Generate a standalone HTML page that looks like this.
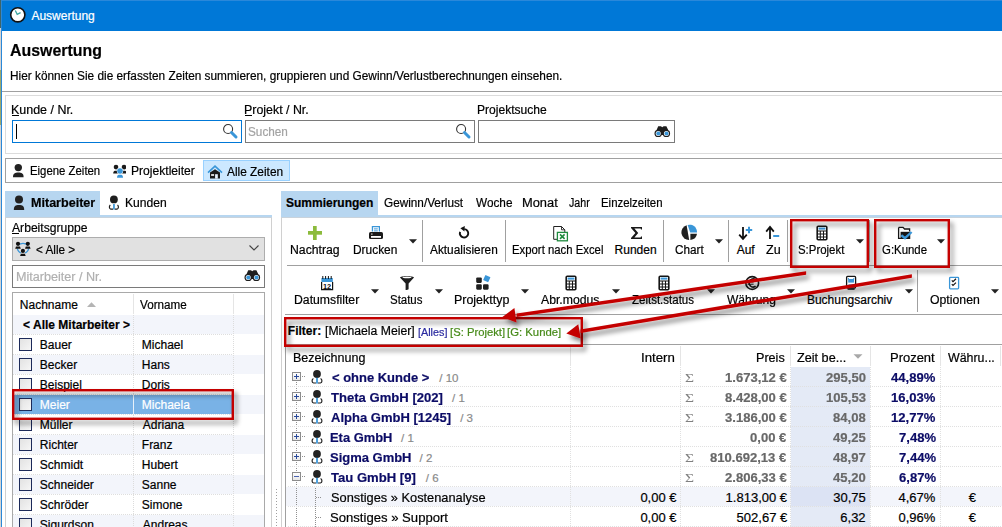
<!DOCTYPE html>
<html><head><meta charset="utf-8">
<style>
*{box-sizing:border-box;margin:0;padding:0}
html,body{width:1002px;height:527px;overflow:hidden;background:#fff}
body{position:relative;font-family:"Liberation Sans",sans-serif;font-size:12px;color:#000}
.a{position:absolute}
.t{position:absolute;white-space:nowrap;line-height:16px;transform-origin:0 0;-webkit-text-stroke:0.2px currentColor}
</style></head><body>
<div class="a" style="left:0px;top:0px;width:1px;height:527px;background:#d4d4d4;"></div>
<div class="a" style="left:0px;top:0px;width:1px;height:28px;background:#3e6468;"></div>
<div class="a" style="left:0px;top:70px;width:1px;height:55px;background:#9ca86c;"></div>
<div class="a" style="left:1px;top:0px;width:1px;height:527px;background:#2b88d8;"></div>
<div class="a" style="left:2px;top:0px;width:1000px;height:31px;background:#0078d7;"></div>
<div class="a" style="left:2px;top:0px;width:1000px;height:1px;background:#2a88da;"></div>
<svg class="a" style="left:9px;top:6px" width="18" height="18" viewBox="0 0 18 18"><circle cx="8.8" cy="8.8" r="7.1" fill="#fff" stroke="#111" stroke-width="1.6"/>
 <path d="M6.3 4.5 L8.2 8.4 L11.6 6.6" fill="none" stroke="#3aa5a0" stroke-width="1.3"/></svg>
<div class="a" style="left:2px;top:91px;width:1000px;height:1px;background:#a0a0a0;"></div>
<div class="a" style="left:5px;top:95px;width:1100px;height:59px;border:1px solid #dcdcdc;background:transparent;"></div>
<div class="a" style="left:12px;top:115px;width:7px;height:1px;background:#000;"></div>
<div class="a" style="left:12px;top:120px;width:230px;height:23px;border:1px solid #0078d7;background:transparent;"></div>
<div class="a" style="left:16px;top:124px;width:1px;height:15px;background:#000;"></div>
<svg class="a" style="left:220px;top:122px" width="20" height="20" viewBox="0 0 20 20"><circle cx="8.1" cy="7" r="4.5" fill="none" stroke="#333" stroke-width="1.1"/>
 <path d="M11.5 10.5 L16 15" stroke="#3a96d8" stroke-width="3" stroke-linecap="round"/></svg>
<div class="a" style="left:245px;top:115px;width:7px;height:1px;background:#000;"></div>
<div class="a" style="left:245px;top:120px;width:230px;height:23px;border:1px solid #7a7a7a;background:transparent;"></div>
<svg class="a" style="left:453px;top:122px" width="20" height="20" viewBox="0 0 20 20"><circle cx="8.1" cy="7" r="4.5" fill="none" stroke="#333" stroke-width="1.1"/>
 <path d="M11.5 10.5 L16 15" stroke="#3a96d8" stroke-width="3" stroke-linecap="round"/></svg>
<div class="a" style="left:478px;top:120px;width:197px;height:23px;border:1px solid #7a7a7a;background:transparent;"></div>
<svg class="a" style="left:654px;top:125px" width="17" height="13" viewBox="0 0 17 13"><path d="M2.6 5 L4.2 1.2 L7 1.2 L8.2 2.2 L9.6 1.2 L12.4 1.2 L14.2 5 L10 10 L7 10Z" fill="#1e1e1e"/>
 <circle cx="4.2" cy="8.4" r="3.7" fill="#1e1e1e"/><circle cx="12.4" cy="8.4" r="3.7" fill="#1e1e1e"/>
 <circle cx="4.2" cy="8.4" r="2.5" fill="#fff"/><circle cx="12.4" cy="8.4" r="2.5" fill="#fff"/>
 <circle cx="4.3" cy="8.6" r="2" fill="#3a96d8"/><circle cx="12.5" cy="8.6" r="2" fill="#3a96d8"/></svg>
<div class="a" style="left:5px;top:158px;width:1100px;height:25px;border:1px solid #a0a0a0;background:transparent;"></div>
<svg class="a" style="left:12px;top:163px" width="13" height="16" viewBox="0 0 13 16"><circle cx="6.3" cy="4.6" r="3.7" fill="#222"/>
 <path d="M1 14.2 C1 10.5 3 9.6 6.3 9.6 C9.6 9.6 11.6 10.5 11.6 14.2 Z" fill="#222"/></svg>
<svg class="a" style="left:112px;top:164px" width="14" height="15" viewBox="0 0 14 15"><circle cx="4" cy="3.1" r="2.3" fill="#1a1a1a"/><path d="M1.2 9.6 C1.2 7.2 2.2 6.7 4 6.7 C5.8 6.7 6.8 7.2 6.8 9.6Z" fill="#1a1a1a"/>
 <circle cx="12" cy="3.1" r="2.3" fill="#1a1a1a"/><path d="M9.2 9.6 C9.2 7.2 10.2 6.7 12 6.7 C13.8 6.7 14.8 7.2 14.8 9.6Z" fill="#1a1a1a"/>
 <circle cx="8" cy="7" r="3.2" fill="#fff"/><circle cx="8" cy="7" r="2.8" fill="#3a96d8"/>
 <path d="M5 13.8 C5 11.2 6 10.8 8 10.8 C10 10.8 11 11.2 11 13.8Z" fill="#3a96d8"/></svg>
<div class="a" style="left:203px;top:160px;width:87px;height:21px;border:1px solid #99d1ff;background:#cce8ff;"></div>
<svg class="a" style="left:206px;top:164px" width="18" height="16" viewBox="0 0 18 16"><path d="M2 8.6 L9 2.2 L16 8.6" fill="none" stroke="#3a96d8" stroke-width="1.6"/>
 <path d="M4 14.6 L4 8.6 L9 5.2 L14 8.6 L14 14.6 Z" fill="#1a1a1a"/>
 <rect x="5.1" y="10.2" width="3" height="1.6" fill="#fff"/>
 <rect x="9.1" y="10.2" width="2.7" height="4.4" fill="#eaf4ff"/></svg>
<div class="a" style="left:5px;top:191px;width:95px;height:26px;background:#b7d6f0;"></div>
<div class="a" style="left:5px;top:215px;width:267px;height:2px;background:#b7d6f0;"></div>
<div class="a" style="left:5px;top:217px;width:267px;height:1px;background:#c9d3dc;"></div>
<div class="a" style="left:5px;top:218px;width:1px;height:309px;background:#d0d0d0;"></div>
<div class="a" style="left:271px;top:218px;width:1px;height:309px;background:#d0d0d0;"></div>
<svg class="a" style="left:12px;top:194px" width="14" height="17" viewBox="0 0 14 17"><circle cx="7" cy="5.5" r="4" fill="#222"/>
 <path d="M1.8 16 C1.8 12 3.5 10.9 7 10.9 C10.5 10.9 12.2 12 12.2 16 Z" fill="#222"/></svg>
<svg class="a" style="left:104px;top:193px" width="20" height="20" viewBox="0 0 20 20"><circle cx="9.9" cy="6.4" r="3.9" fill="#1e1e1e"/>
 <path d="M6.3 12 C5 13 5 15.6 6.8 16.2 L9.2 16.2" fill="none" stroke="#1e1e1e" stroke-width="1.2"/>
 <path d="M13.5 12 C14.8 13 14.8 15.6 13 16.2 L10.6 16.2" fill="none" stroke="#1e1e1e" stroke-width="1.2"/>
 <rect x="9.1" y="11" width="1.7" height="5.4" fill="#3a96d8"/></svg>
<div class="a" style="left:12px;top:233px;width:7px;height:1px;background:#000;"></div>
<div class="a" style="left:12px;top:237px;width:253px;height:24px;border:1px solid #adadad;background:#e1e1e1;"></div>
<svg class="a" style="left:13px;top:239px" width="20" height="19" viewBox="0 0 20 19"><path d="M5 6 Q10 2.8 15 6" fill="none" stroke="#3a96d8" stroke-width="1.1"/>
 <path d="M4.2 9.5 Q5.5 13.5 8 14" fill="none" stroke="#3a96d8" stroke-width="1.1"/>
 <path d="M15.8 9.5 Q14.5 13.5 12 14" fill="none" stroke="#3a96d8" stroke-width="1.1"/>
 <circle cx="5" cy="4.8" r="2.1" fill="#111"/><path d="M2.2 9.7 L3 7.6 L7 7.6 L7.8 9.7Z" fill="#111"/>
 <circle cx="14.8" cy="4.8" r="2.1" fill="#111"/><path d="M12 9.7 L12.8 7.6 L16.8 7.6 L17.6 9.7Z" fill="#111"/>
 <circle cx="9.9" cy="11.9" r="2.1" fill="#111"/><path d="M7.1 17 L7.9 14.8 L11.9 14.8 L12.7 17Z" fill="#111"/></svg>
<svg class="a" style="left:249px;top:244px" width="10" height="8" viewBox="0 0 10 8"><path d="M0.5 1.5 L5 6 L9.5 1.5" fill="none" stroke="#444" stroke-width="1.1"/></svg>
<div class="a" style="left:12px;top:265px;width:253px;height:23px;border:1px solid #7a7a7a;background:transparent;"></div>
<svg class="a" style="left:244px;top:269px" width="17" height="13" viewBox="0 0 17 13"><path d="M2.6 5 L4.2 1.2 L7 1.2 L8.2 2.2 L9.6 1.2 L12.4 1.2 L14.2 5 L10 10 L7 10Z" fill="#1e1e1e"/>
 <circle cx="4.2" cy="8.4" r="3.7" fill="#1e1e1e"/><circle cx="12.4" cy="8.4" r="3.7" fill="#1e1e1e"/>
 <circle cx="4.2" cy="8.4" r="2.5" fill="#fff"/><circle cx="12.4" cy="8.4" r="2.5" fill="#fff"/>
 <circle cx="4.3" cy="8.6" r="2" fill="#3a96d8"/><circle cx="12.5" cy="8.6" r="2" fill="#3a96d8"/></svg>
<div class="a" style="left:12px;top:292px;width:253px;height:260px;border:1px solid #a9a9a9;background:transparent;"></div>
<svg class="a" style="left:86px;top:301px" width="11" height="7" viewBox="0 0 11 7"><path d="M1 6 L5.5 1.2 L10 6Z" fill="#b4b4b4"/></svg>
<div class="a" style="left:133px;top:294px;width:1px;height:20px;background:#e5e5e5;"></div>
<div class="a" style="left:233px;top:294px;width:1px;height:20px;background:#e5e5e5;"></div>
<div class="a" style="left:13px;top:315px;width:251px;height:19px;background:#f3f5fb;"></div>
<div class="a" style="left:13px;top:334px;width:220px;height:1px;background:repeating-linear-gradient(90deg,#dedede 0 1px,transparent 1px 2px)"></div>
<div class="a" style="left:13px;top:354px;width:220px;height:1px;background:repeating-linear-gradient(90deg,#dedede 0 1px,transparent 1px 2px)"></div>
<div class="a" style="left:19px;top:338px;width:13px;height:13px;border:1px solid #1c2a5a;background:linear-gradient(135deg,#e2e2e2,#f6f6f6);"></div>
<div class="a" style="left:13px;top:355px;width:251px;height:19px;background:#f3f5fb;"></div>
<div class="a" style="left:13px;top:374px;width:220px;height:1px;background:repeating-linear-gradient(90deg,#dedede 0 1px,transparent 1px 2px)"></div>
<div class="a" style="left:19px;top:358px;width:13px;height:13px;border:1px solid #1c2a5a;background:linear-gradient(135deg,#e2e2e2,#f6f6f6);"></div>
<div class="a" style="left:13px;top:394px;width:220px;height:1px;background:repeating-linear-gradient(90deg,#dedede 0 1px,transparent 1px 2px)"></div>
<div class="a" style="left:19px;top:378px;width:13px;height:13px;border:1px solid #1c2a5a;background:linear-gradient(135deg,#e2e2e2,#f6f6f6);"></div>
<div class="a" style="left:13px;top:395px;width:251px;height:19px;background:#f3f5fb;"></div>
<div class="a" style="left:13px;top:395px;width:251px;height:19px;background:#f3f5fb;"></div>
<div class="a" style="left:13px;top:395px;width:220px;height:19px;background:#79b2e6;"></div>
<div class="a" style="left:13px;top:414px;width:220px;height:1px;background:repeating-linear-gradient(90deg,#dedede 0 1px,transparent 1px 2px)"></div>
<div class="a" style="left:19px;top:398px;width:13px;height:13px;border:1px solid #1c2a5a;background:linear-gradient(135deg,#e2e2e2,#f6f6f6);"></div>
<div class="a" style="left:13px;top:434px;width:220px;height:1px;background:repeating-linear-gradient(90deg,#dedede 0 1px,transparent 1px 2px)"></div>
<div class="a" style="left:19px;top:418px;width:13px;height:13px;border:1px solid #1c2a5a;background:linear-gradient(135deg,#e2e2e2,#f6f6f6);"></div>
<div class="a" style="left:13px;top:435px;width:251px;height:19px;background:#f3f5fb;"></div>
<div class="a" style="left:13px;top:454px;width:220px;height:1px;background:repeating-linear-gradient(90deg,#dedede 0 1px,transparent 1px 2px)"></div>
<div class="a" style="left:19px;top:438px;width:13px;height:13px;border:1px solid #1c2a5a;background:linear-gradient(135deg,#e2e2e2,#f6f6f6);"></div>
<div class="a" style="left:13px;top:474px;width:220px;height:1px;background:repeating-linear-gradient(90deg,#dedede 0 1px,transparent 1px 2px)"></div>
<div class="a" style="left:19px;top:458px;width:13px;height:13px;border:1px solid #1c2a5a;background:linear-gradient(135deg,#e2e2e2,#f6f6f6);"></div>
<div class="a" style="left:13px;top:475px;width:251px;height:19px;background:#f3f5fb;"></div>
<div class="a" style="left:13px;top:494px;width:220px;height:1px;background:repeating-linear-gradient(90deg,#dedede 0 1px,transparent 1px 2px)"></div>
<div class="a" style="left:19px;top:478px;width:13px;height:13px;border:1px solid #1c2a5a;background:linear-gradient(135deg,#e2e2e2,#f6f6f6);"></div>
<div class="a" style="left:13px;top:514px;width:220px;height:1px;background:repeating-linear-gradient(90deg,#dedede 0 1px,transparent 1px 2px)"></div>
<div class="a" style="left:19px;top:498px;width:13px;height:13px;border:1px solid #1c2a5a;background:linear-gradient(135deg,#e2e2e2,#f6f6f6);"></div>
<div class="a" style="left:13px;top:515px;width:251px;height:19px;background:#f3f5fb;"></div>
<div class="a" style="left:13px;top:534px;width:220px;height:1px;background:repeating-linear-gradient(90deg,#dedede 0 1px,transparent 1px 2px)"></div>
<div class="a" style="left:19px;top:518px;width:13px;height:13px;border:1px solid #1c2a5a;background:linear-gradient(135deg,#e2e2e2,#f6f6f6);"></div>
<div class="a" style="left:133px;top:315px;width:1px;height:212px;background:repeating-linear-gradient(#dcdcdc 0 1px,transparent 1px 2px)"></div>
<div class="a" style="left:233px;top:315px;width:1px;height:212px;background:repeating-linear-gradient(#dcdcdc 0 1px,transparent 1px 2px)"></div>
<div class="a" style="left:133px;top:395px;width:1px;height:19px;background:#e8f1fa;"></div>
<div class="a" style="left:276px;top:489px;width:1px;height:38px;background:repeating-linear-gradient(#a0a0a0 0 1px,transparent 1px 3px)"></div>
<div class="a" style="left:281px;top:191px;width:97px;height:26px;background:#b7d6f0;"></div>
<div class="a" style="left:281px;top:215px;width:721px;height:2px;background:#b7d6f0;"></div>
<div class="a" style="left:281px;top:217px;width:721px;height:1px;background:#c9d3dc;"></div>
<div class="a" style="left:281px;top:218px;width:1px;height:309px;background:#d0d0d0;"></div>
<svg class="a" style="left:308px;top:226px" width="14" height="14" viewBox="0 0 14 14"><rect x="5" y="0" width="3.7" height="14" fill="#8cbb3c"/><rect x="0" y="5" width="14" height="3.7" fill="#8cbb3c"/></svg>
<svg class="a" style="left:368px;top:225px" width="16" height="15" viewBox="0 0 16 15"><path d="M4.4 6.6 V1.6 H11.4 V6.6" fill="none" stroke="#3a96d8" stroke-width="1.2"/>
 <rect x="5.8" y="3.4" width="4" height="1" fill="#3a96d8"/><rect x="5.8" y="5.4" width="4" height="1" fill="#3a96d8"/>
 <rect x="1" y="7" width="14" height="7" rx="1.6" fill="#1a1a1a"/>
 <rect x="3" y="11" width="10" height="1.8" fill="#fff"/>
 <rect x="3" y="8.6" width="1.6" height="0.9" fill="#fff"/></svg>
<svg class="a" style="left:409px;top:239px" width="9" height="6" viewBox="0 0 9 6"><path d="M0 0.2 H8 L4 4.4Z" fill="#222"/></svg>
<div class="a" style="left:422px;top:220px;width:1px;height:42px;background:#a0a0a0;"></div>
<svg class="a" style="left:457px;top:225px" width="14" height="15" viewBox="0 0 14 15"><path d="M7.2 4.1 A4.2 4.2 0 1 1 3.1 6.9" fill="none" stroke="#111" stroke-width="1.9"/>
 <path d="M3.4 3.3 L7.8 1 L7.4 6.6Z" fill="#111"/></svg>
<div class="a" style="left:505px;top:220px;width:1px;height:42px;background:#a0a0a0;"></div>
<svg class="a" style="left:552px;top:225px" width="17" height="17" viewBox="0 0 17 17"><path d="M1.7 1.5 H9.5 L12.8 4.8 V14.3 H1.7 Z" fill="#fff" stroke="#222" stroke-width="1"/>
 <path d="M9.5 1.5 V4.8 H12.8" fill="none" stroke="#222" stroke-width="0.9"/>
 <rect x="5.4" y="7.4" width="10" height="8.4" fill="#fff" stroke="#1f8a3e" stroke-width="1.3"/>
 <path d="M8 9.4 L12.6 13.8 M12.6 9.4 L8 13.8" stroke="#1f8a3e" stroke-width="1.6"/></svg>
<svg class="a" style="left:630px;top:226px" width="13" height="14" viewBox="0 0 13 14"><path d="M1 1 H12 V3.6 H11 L10.6 2.6 H4.4 L8.2 7 L4.4 11.4 H10.6 L11 10.4 H12 V13 H1 V12 L5.4 7 L1 2Z" fill="#1a1a1a"/></svg>
<div class="a" style="left:663px;top:220px;width:1px;height:42px;background:#a0a0a0;"></div>
<svg class="a" style="left:681px;top:224px" width="17" height="17" viewBox="0 0 17 17"><path d="M5.6 1.2 A7.6 7.6 0 0 0 8.2 16 Z" fill="#1f1f1f"/>
 <path d="M9.4 9.8 H16 A7.4 7.4 0 0 1 9.4 16 Z" fill="#1f1f1f"/>
 <path d="M6.6 1 A7.4 7.4 0 0 1 16 8.6 H9.2 Z" fill="#3a96d8"/></svg>
<svg class="a" style="left:715px;top:239px" width="9" height="6" viewBox="0 0 9 6"><path d="M0 0.2 H8 L4 4.4Z" fill="#222"/></svg>
<div class="a" style="left:728px;top:220px;width:1px;height:42px;background:#a0a0a0;"></div>
<svg class="a" style="left:737px;top:225px" width="16" height="16" viewBox="0 0 16 16"><path d="M6 2 V14 M2.2 9.6 L6 13.8 L9.8 9.6" fill="none" stroke="#111" stroke-width="1.8"/>
 <path d="M12 1.8 V8.2 M8.8 5 H15.2" stroke="#3a96d8" stroke-width="2"/></svg>
<svg class="a" style="left:764px;top:225px" width="17" height="16" viewBox="0 0 17 16"><path d="M6 14 V2 M2.2 6.6 L6 2 L9.8 6.6" fill="none" stroke="#111" stroke-width="1.8"/>
 <path d="M9.2 11 H15.2" stroke="#3a96d8" stroke-width="2"/></svg>
<div class="a" style="left:787px;top:220px;width:1px;height:42px;background:#a0a0a0;"></div>
<svg class="a" style="left:816px;top:225px" width="12" height="16" viewBox="0 0 12 16"><rect x="1.2" y="1.2" width="9.6" height="13.6" rx="1" fill="#fff" stroke="#151515" stroke-width="1.6"/>
 <rect x="2.6" y="2.6" width="6.8" height="2" fill="#3a96d8"/>
 <path d="M1.2 6 H10.8 M1.2 9 H10.8 M1.2 12 H10.8 M4.3 6 V14.8 M7.5 6 V14.8" stroke="#151515" stroke-width="1"/></svg>
<svg class="a" style="left:856px;top:239px" width="9" height="6" viewBox="0 0 9 6"><path d="M0 0.2 H8 L4 4.4Z" fill="#222"/></svg>
<div class="a" style="left:869px;top:220px;width:1px;height:42px;background:#a0a0a0;"></div>
<svg class="a" style="left:897px;top:225px" width="17" height="16" viewBox="0 0 17 16"><path d="M1.6 2.4 H6 L7.6 4 H12.6 V6" fill="none" stroke="#151515" stroke-width="1.3"/>
 <path d="M1.6 2.4 V13.4 H12.6 V6.5" fill="none" stroke="#151515" stroke-width="1.3"/>
 <rect x="3.6" y="6.8" width="9" height="6.6" fill="#151515"/>
 <path d="M4.3 10.2 L8 13.2 L14.6 7" fill="none" stroke="#3a96d8" stroke-width="2.4"/></svg>
<svg class="a" style="left:937px;top:239px" width="9" height="6" viewBox="0 0 9 6"><path d="M0 0.2 H8 L4 4.4Z" fill="#222"/></svg>
<div class="a" style="left:287px;top:265px;width:715px;height:1px;background:#a0a0a0;"></div>
<svg class="a" style="left:320px;top:275px" width="14" height="16" viewBox="0 0 14 16"><rect x="1.4" y="3" width="11.4" height="4" fill="#3a96d8"/>
 <path d="M2.8 1 V4 M5.6 1 V4 M8.4 1 V4 M11.2 1 V4" stroke="#111" stroke-width="1"/>
 <path d="M1.6 7 V14.6 H12.6 V7" fill="none" stroke="#111" stroke-width="1.2"/>
 <text x="7.1" y="13.6" font-family="Liberation Sans" font-size="7.4" font-weight="bold" text-anchor="middle" fill="#111">12</text></svg>
<svg class="a" style="left:371px;top:289px" width="9" height="6" viewBox="0 0 9 6"><path d="M0 0.2 H8 L4 4.4Z" fill="#222"/></svg>
<svg class="a" style="left:399px;top:275px" width="16" height="16" viewBox="0 0 16 16"><path d="M1 2.6 C1 0.8 15 0.8 15 2.6 L9.6 8.6 V14 C9.6 14.6 7.6 15 6.6 15 V8.6 Z" fill="#1f1f1f"/>
 <ellipse cx="8" cy="2.5" rx="4.6" ry="0.7" fill="#fff"/></svg>
<svg class="a" style="left:435px;top:289px" width="9" height="6" viewBox="0 0 9 6"><path d="M0 0.2 H8 L4 4.4Z" fill="#222"/></svg>
<svg class="a" style="left:475px;top:274px" width="16" height="17" viewBox="0 0 16 17"><rect x="1.2" y="3.5" width="5.6" height="5.4" rx="1.1" fill="#1f1f1f"/>
 <rect x="1.2" y="10.3" width="5.6" height="5.4" rx="1.1" fill="#1f1f1f"/>
 <rect x="8" y="10.3" width="5.6" height="5.4" rx="1.1" fill="#1f1f1f"/>
 <rect x="9" y="1.8" width="5.6" height="5.6" rx="0.6" fill="#3a96d8" transform="rotate(25 11.8 4.6)"/></svg>
<svg class="a" style="left:521px;top:289px" width="9" height="6" viewBox="0 0 9 6"><path d="M0 0.2 H8 L4 4.4Z" fill="#222"/></svg>
<svg class="a" style="left:565px;top:275px" width="12" height="16" viewBox="0 0 12 16"><rect x="1.2" y="1.2" width="9.6" height="13.6" rx="1" fill="#fff" stroke="#151515" stroke-width="1.6"/>
 <rect x="2.6" y="2.6" width="6.8" height="2" fill="#3a96d8"/>
 <path d="M1.2 6 H10.8 M1.2 9 H10.8 M1.2 12 H10.8 M4.3 6 V14.8 M7.5 6 V14.8" stroke="#151515" stroke-width="1"/></svg>
<svg class="a" style="left:612px;top:289px" width="9" height="6" viewBox="0 0 9 6"><path d="M0 0.2 H8 L4 4.4Z" fill="#222"/></svg>
<svg class="a" style="left:658px;top:275px" width="12" height="16" viewBox="0 0 12 16"><rect x="1.2" y="1.2" width="9.6" height="13.6" rx="1" fill="#fff" stroke="#151515" stroke-width="1.6"/>
 <rect x="2.6" y="2.6" width="6.8" height="2" fill="#3a96d8"/>
 <path d="M1.2 6 H10.8 M1.2 9 H10.8 M1.2 12 H10.8 M4.3 6 V14.8 M7.5 6 V14.8" stroke="#151515" stroke-width="1"/></svg>
<svg class="a" style="left:707px;top:289px" width="9" height="6" viewBox="0 0 9 6"><path d="M0 0.2 H8 L4 4.4Z" fill="#222"/></svg>
<svg class="a" style="left:744px;top:275px" width="16" height="16" viewBox="0 0 16 16"><circle cx="8.2" cy="8" r="6.4" fill="#fff" stroke="#151515" stroke-width="1.6"/>
 <path d="M11.6 4.8 A4 4 0 1 0 11.6 11.2" fill="none" stroke="#151515" stroke-width="1.6"/>
 <path d="M3.6 7 H9.6 M3.6 9.2 H9.6" stroke="#151515" stroke-width="1"/></svg>
<svg class="a" style="left:787px;top:289px" width="9" height="6" viewBox="0 0 9 6"><path d="M0 0.2 H8 L4 4.4Z" fill="#222"/></svg>
<svg class="a" style="left:845px;top:275px" width="12" height="16" viewBox="0 0 12 16"><rect x="1.6" y="1.4" width="9" height="11.6" rx="1" fill="#fff" stroke="#151515" stroke-width="1.3"/>
 <rect x="3.2" y="4" width="5.8" height="3.6" fill="#3a96d8"/>
 <path d="M3.4 3 V4.4 M8.8 3 V4.4 M3.4 9.8 H8.8" stroke="#3a96d8" stroke-width="1"/>
 <rect x="2.6" y="13.4" width="7" height="1.4" fill="#151515"/></svg>
<svg class="a" style="left:905px;top:289px" width="9" height="6" viewBox="0 0 9 6"><path d="M0 0.2 H8 L4 4.4Z" fill="#222"/></svg>
<div class="a" style="left:917px;top:270px;width:1px;height:42px;background:#a0a0a0;"></div>
<svg class="a" style="left:948px;top:276px" width="12" height="14" viewBox="0 0 12 14"><rect x="1.6" y="1.4" width="9" height="11.4" rx="0.8" fill="#fff" stroke="#3a96d8" stroke-width="1.3"/>
 <path d="M3.8 4.4 L5 5.6 L8 2.8 M3.8 8.2 L5 9.4 L8 6.6" fill="none" stroke="#151515" stroke-width="1.2"/></svg>
<svg class="a" style="left:991px;top:289px" width="9" height="6" viewBox="0 0 9 6"><path d="M0 0.2 H8 L4 4.4Z" fill="#222"/></svg>
<div class="a" style="left:285px;top:314px;width:717px;height:1px;background:#a0a0a0;"></div>
<div class="a" style="left:285px;top:344px;width:717px;height:1px;background:#a0a0a0;"></div>
<div class="a" style="left:285px;top:344px;width:1px;height:183px;background:#a0a0a0;"></div>
<div class="a" style="left:570px;top:346px;width:1px;height:20px;background:#e5e5e5;"></div>
<div class="a" style="left:680px;top:346px;width:1px;height:20px;background:#e5e5e5;"></div>
<div class="a" style="left:790px;top:346px;width:1px;height:20px;background:#e5e5e5;"></div>
<svg class="a" style="left:853px;top:354px" width="10" height="5" viewBox="0 0 10 5"><path d="M0.5 0.2 H9.5 L5 4.8Z" fill="#a8a8a8"/></svg>
<div class="a" style="left:870px;top:346px;width:1px;height:20px;background:#e5e5e5;"></div>
<div class="a" style="left:940px;top:346px;width:1px;height:20px;background:#e5e5e5;"></div>
<div class="a" style="left:1000px;top:346px;width:1px;height:20px;background:#e5e5e5;"></div>
<div class="a" style="left:791px;top:367px;width:79px;height:160px;background:#e4eaf6;"></div>
<div class="a" style="left:286px;top:487px;width:716px;height:19px;background:#f3f5fb;"></div>
<div class="a" style="left:791px;top:487px;width:79px;height:19px;background:#dce3f4;"></div>
<div class="a" style="left:296px;top:382px;width:1px;height:145px;background:repeating-linear-gradient(#909090 0 1px,transparent 1px 2px)"></div>
<div class="a" style="left:315px;top:488px;width:1px;height:39px;background:repeating-linear-gradient(#909090 0 1px,transparent 1px 2px)"></div>
<div class="a" style="left:292px;top:372px;width:9px;height:9px;border:1px solid #8c8c8c;background:linear-gradient(#fff,#e6e6e6);"></div>
<div class="a" style="left:294px;top:376px;width:5px;height:1px;background:#2a4a9a;"></div>
<div class="a" style="left:296px;top:374px;width:1px;height:5px;background:#2a4a9a;"></div>
<div class="a" style="left:302px;top:376px;width:4px;height:1px;background:repeating-linear-gradient(90deg,#909090 0 1px,transparent 1px 2px)"></div>
<svg class="a" style="left:311px;top:370px" width="12" height="14" viewBox="0 0 12 14"><circle cx="6" cy="4" r="3.9" fill="#222"/>
 <path d="M2.4 8.6 C0.6 9.6 0.6 12.6 2.6 13 L5 13 M9.6 8.6 C11.4 9.6 11.4 12.6 9.4 13 L7 13" fill="none" stroke="#222" stroke-width="1.2"/>
 <rect x="5.1" y="7.8" width="1.8" height="5.8" fill="#3a96d8"/></svg>
<div class="a" style="left:292px;top:392px;width:9px;height:9px;border:1px solid #8c8c8c;background:linear-gradient(#fff,#e6e6e6);"></div>
<div class="a" style="left:294px;top:396px;width:5px;height:1px;background:#2a4a9a;"></div>
<div class="a" style="left:296px;top:394px;width:1px;height:5px;background:#2a4a9a;"></div>
<div class="a" style="left:302px;top:396px;width:4px;height:1px;background:repeating-linear-gradient(90deg,#909090 0 1px,transparent 1px 2px)"></div>
<svg class="a" style="left:311px;top:390px" width="12" height="14" viewBox="0 0 12 14"><circle cx="6" cy="4" r="3.9" fill="#222"/>
 <path d="M2.4 8.6 C0.6 9.6 0.6 12.6 2.6 13 L5 13 M9.6 8.6 C11.4 9.6 11.4 12.6 9.4 13 L7 13" fill="none" stroke="#222" stroke-width="1.2"/>
 <rect x="5.1" y="7.8" width="1.8" height="5.8" fill="#3a96d8"/></svg>
<div class="a" style="left:292px;top:412px;width:9px;height:9px;border:1px solid #8c8c8c;background:linear-gradient(#fff,#e6e6e6);"></div>
<div class="a" style="left:294px;top:416px;width:5px;height:1px;background:#2a4a9a;"></div>
<div class="a" style="left:296px;top:414px;width:1px;height:5px;background:#2a4a9a;"></div>
<div class="a" style="left:302px;top:416px;width:4px;height:1px;background:repeating-linear-gradient(90deg,#909090 0 1px,transparent 1px 2px)"></div>
<svg class="a" style="left:311px;top:410px" width="12" height="14" viewBox="0 0 12 14"><circle cx="6" cy="4" r="3.9" fill="#222"/>
 <path d="M2.4 8.6 C0.6 9.6 0.6 12.6 2.6 13 L5 13 M9.6 8.6 C11.4 9.6 11.4 12.6 9.4 13 L7 13" fill="none" stroke="#222" stroke-width="1.2"/>
 <rect x="5.1" y="7.8" width="1.8" height="5.8" fill="#3a96d8"/></svg>
<div class="a" style="left:292px;top:432px;width:9px;height:9px;border:1px solid #8c8c8c;background:linear-gradient(#fff,#e6e6e6);"></div>
<div class="a" style="left:294px;top:436px;width:5px;height:1px;background:#2a4a9a;"></div>
<div class="a" style="left:296px;top:434px;width:1px;height:5px;background:#2a4a9a;"></div>
<div class="a" style="left:302px;top:436px;width:4px;height:1px;background:repeating-linear-gradient(90deg,#909090 0 1px,transparent 1px 2px)"></div>
<svg class="a" style="left:311px;top:430px" width="12" height="14" viewBox="0 0 12 14"><circle cx="6" cy="4" r="3.9" fill="#222"/>
 <path d="M2.4 8.6 C0.6 9.6 0.6 12.6 2.6 13 L5 13 M9.6 8.6 C11.4 9.6 11.4 12.6 9.4 13 L7 13" fill="none" stroke="#222" stroke-width="1.2"/>
 <rect x="5.1" y="7.8" width="1.8" height="5.8" fill="#3a96d8"/></svg>
<div class="a" style="left:292px;top:452px;width:9px;height:9px;border:1px solid #8c8c8c;background:linear-gradient(#fff,#e6e6e6);"></div>
<div class="a" style="left:294px;top:456px;width:5px;height:1px;background:#2a4a9a;"></div>
<div class="a" style="left:296px;top:454px;width:1px;height:5px;background:#2a4a9a;"></div>
<div class="a" style="left:302px;top:456px;width:4px;height:1px;background:repeating-linear-gradient(90deg,#909090 0 1px,transparent 1px 2px)"></div>
<svg class="a" style="left:311px;top:450px" width="12" height="14" viewBox="0 0 12 14"><circle cx="6" cy="4" r="3.9" fill="#222"/>
 <path d="M2.4 8.6 C0.6 9.6 0.6 12.6 2.6 13 L5 13 M9.6 8.6 C11.4 9.6 11.4 12.6 9.4 13 L7 13" fill="none" stroke="#222" stroke-width="1.2"/>
 <rect x="5.1" y="7.8" width="1.8" height="5.8" fill="#3a96d8"/></svg>
<div class="a" style="left:292px;top:472px;width:9px;height:9px;border:1px solid #8c8c8c;background:linear-gradient(#fff,#e6e6e6);"></div>
<div class="a" style="left:294px;top:476px;width:5px;height:1px;background:#4a62b0;"></div>
<div class="a" style="left:302px;top:476px;width:4px;height:1px;background:repeating-linear-gradient(90deg,#909090 0 1px,transparent 1px 2px)"></div>
<svg class="a" style="left:311px;top:470px" width="12" height="14" viewBox="0 0 12 14"><circle cx="6" cy="4" r="3.9" fill="#222"/>
 <path d="M2.4 8.6 C0.6 9.6 0.6 12.6 2.6 13 L5 13 M9.6 8.6 C11.4 9.6 11.4 12.6 9.4 13 L7 13" fill="none" stroke="#222" stroke-width="1.2"/>
 <rect x="5.1" y="7.8" width="1.8" height="5.8" fill="#3a96d8"/></svg>
<div class="a" style="left:316px;top:497px;width:6px;height:1px;background:repeating-linear-gradient(90deg,#909090 0 1px,transparent 1px 2px)"></div>
<div class="a" style="left:316px;top:517px;width:6px;height:1px;background:repeating-linear-gradient(90deg,#909090 0 1px,transparent 1px 2px)"></div>
<div class="a" style="left:288px;top:386px;width:714px;height:1px;background:repeating-linear-gradient(90deg,#e0e0e0 0 1px,transparent 1px 2px)"></div>
<div class="a" style="left:288px;top:406px;width:714px;height:1px;background:repeating-linear-gradient(90deg,#e0e0e0 0 1px,transparent 1px 2px)"></div>
<div class="a" style="left:288px;top:426px;width:714px;height:1px;background:repeating-linear-gradient(90deg,#e0e0e0 0 1px,transparent 1px 2px)"></div>
<div class="a" style="left:288px;top:446px;width:714px;height:1px;background:repeating-linear-gradient(90deg,#e0e0e0 0 1px,transparent 1px 2px)"></div>
<div class="a" style="left:288px;top:466px;width:714px;height:1px;background:repeating-linear-gradient(90deg,#e0e0e0 0 1px,transparent 1px 2px)"></div>
<div class="a" style="left:288px;top:486px;width:714px;height:1px;background:repeating-linear-gradient(90deg,#e0e0e0 0 1px,transparent 1px 2px)"></div>
<div class="a" style="left:288px;top:506px;width:714px;height:1px;background:repeating-linear-gradient(90deg,#e0e0e0 0 1px,transparent 1px 2px)"></div>
<div class="a" style="left:288px;top:526px;width:714px;height:1px;background:repeating-linear-gradient(90deg,#e0e0e0 0 1px,transparent 1px 2px)"></div>
<div class="a" style="left:570px;top:367px;width:1px;height:160px;background:repeating-linear-gradient(#e0e0e0 0 1px,transparent 1px 2px)"></div>
<div class="a" style="left:680px;top:367px;width:1px;height:160px;background:repeating-linear-gradient(#e0e0e0 0 1px,transparent 1px 2px)"></div>
<div class="a" style="left:790px;top:367px;width:1px;height:160px;background:repeating-linear-gradient(#e0e0e0 0 1px,transparent 1px 2px)"></div>
<div class="a" style="left:870px;top:367px;width:1px;height:160px;background:repeating-linear-gradient(#e0e0e0 0 1px,transparent 1px 2px)"></div>
<div class="a" style="left:940px;top:367px;width:1px;height:160px;background:repeating-linear-gradient(#e0e0e0 0 1px,transparent 1px 2px)"></div>
<div class="t" style="top:8px;font-size:12px;color:#fff;left:31.40px;">Auswertung</div>
<div class="t" style="top:43px;font-size:16px;color:#000;font-weight:bold;left:10.30px;transform:scaleX(0.9935);">Auswertung</div>
<div class="t" style="top:68px;font-size:12px;color:#000;left:10.21px;transform:scaleX(0.9857);">Hier können Sie die erfassten Zeiten summieren, gruppieren und Gewinn/Verlustberechnungen einsehen.</div>
<div class="t" style="top:102px;font-size:12px;color:#000;left:11.46px;transform:scaleX(1.0379);">Kunde / Nr.</div>
<div class="t" style="top:102px;font-size:12px;color:#000;left:244.37px;transform:scaleX(1.0328);">Projekt / Nr.</div>
<div class="t" style="top:124px;font-size:12px;color:#a3a3a3;left:248.22px;transform:scaleX(0.9795);">Suchen</div>
<div class="t" style="top:102px;font-size:12px;color:#000;left:476.70px;transform:scaleX(1.0044);">Projektsuche</div>
<div class="t" style="top:163px;font-size:12px;color:#000;left:29.85px;transform:scaleX(0.9479);">Eigene Zeiten</div>
<div class="t" style="top:163px;font-size:12px;color:#000;left:131.29px;transform:scaleX(1.0081);">Projektleiter</div>
<div class="t" style="top:164px;font-size:12px;color:#000;left:227.20px;transform:scaleX(0.9893);">Alle Zeiten</div>
<div class="t" style="top:195px;font-size:12px;color:#000;font-weight:bold;left:30.85px;transform:scaleX(1.0467);">Mitarbeiter</div>
<div class="t" style="top:195px;font-size:12px;color:#000;left:125.29px;transform:scaleX(1.0100);">Kunden</div>
<div class="t" style="top:220px;font-size:12px;color:#000;left:12.20px;transform:scaleX(1.0108);">Arbeitsgruppe</div>
<div class="t" style="top:242px;font-size:12px;color:#000;left:35.90px;transform:scaleX(0.9775);">&lt; Alle &gt;</div>
<div class="t" style="top:269px;font-size:12px;color:#b0b0b0;left:15.65px;transform:scaleX(1.0500);">Mitarbeiter / Nr.</div>
<div class="t" style="top:297px;font-size:12px;color:#000;left:19.80px;">Nachname</div>
<div class="t" style="top:297px;font-size:12px;color:#000;left:140.00px;transform:scaleX(0.9729);">Vorname</div>
<div class="t" style="top:317px;font-size:12px;color:#000;font-weight:bold;left:23.10px;">&lt; Alle Mitarbeiter &gt;</div>
<div class="t" style="top:337px;font-size:12px;color:#000;left:39.80px;">Bauer</div>
<div class="t" style="top:337px;font-size:12px;color:#000;left:141.80px;">Michael</div>
<div class="t" style="top:357px;font-size:12px;color:#000;left:39.80px;">Becker</div>
<div class="t" style="top:357px;font-size:12px;color:#000;left:141.80px;">Hans</div>
<div class="t" style="top:377px;font-size:12px;color:#000;left:39.80px;">Beispiel</div>
<div class="t" style="top:377px;font-size:12px;color:#000;left:141.80px;">Doris</div>
<div class="t" style="top:397px;font-size:12px;color:#fff;left:39.80px;">Meier</div>
<div class="t" style="top:397px;font-size:12px;color:#fff;left:141.80px;">Michaela</div>
<div class="t" style="top:417px;font-size:12px;color:#000;left:39.80px;">Müller</div>
<div class="t" style="top:417px;font-size:12px;color:#000;left:142.80px;">Adriana</div>
<div class="t" style="top:437px;font-size:12px;color:#000;left:39.80px;">Richter</div>
<div class="t" style="top:437px;font-size:12px;color:#000;left:141.80px;">Franz</div>
<div class="t" style="top:457px;font-size:12px;color:#000;left:39.80px;">Schmidt</div>
<div class="t" style="top:457px;font-size:12px;color:#000;left:141.80px;">Hubert</div>
<div class="t" style="top:477px;font-size:12px;color:#000;left:39.80px;">Schneider</div>
<div class="t" style="top:477px;font-size:12px;color:#000;left:141.80px;">Sanne</div>
<div class="t" style="top:497px;font-size:12px;color:#000;left:39.80px;">Schröder</div>
<div class="t" style="top:497px;font-size:12px;color:#000;left:141.80px;">Simone</div>
<div class="t" style="top:517px;font-size:12px;color:#000;left:39.80px;">Sigurdson</div>
<div class="t" style="top:517px;font-size:12px;color:#000;left:142.80px;">Andreas</div>
<div class="t" style="top:195px;font-size:12px;color:#000;font-weight:bold;left:286.00px;">Summierungen</div>
<div class="t" style="top:195px;font-size:12px;color:#000;left:384.20px;transform:scaleX(0.9802);">Gewinn/Verlust</div>
<div class="t" style="top:195px;font-size:12px;color:#000;left:475.50px;transform:scaleX(0.9811);">Woche</div>
<div class="t" style="top:195px;font-size:12px;color:#000;left:522.33px;transform:scaleX(1.0719);">Monat</div>
<div class="t" style="top:195px;font-size:12px;color:#000;left:569.30px;transform:scaleX(0.8870);">Jahr</div>
<div class="t" style="top:195px;font-size:12px;color:#000;left:600.65px;transform:scaleX(0.9508);">Einzelzeiten</div>
<div class="t" style="top:242px;font-size:12px;color:#000;left:289.58px;transform:scaleX(1.0191);">Nachtrag</div>
<div class="t" style="top:242px;font-size:12px;color:#000;left:353.41px;transform:scaleX(0.9930);">Drucken</div>
<div class="t" style="top:242px;font-size:12px;color:#000;left:430.30px;transform:scaleX(0.9868);">Aktualisieren</div>
<div class="t" style="top:242px;font-size:12px;color:#000;left:512.45px;transform:scaleX(0.9453);">Export nach Excel</div>
<div class="t" style="top:242px;font-size:12px;color:#000;left:614.60px;">Runden</div>
<div class="t" style="top:242px;font-size:12px;color:#000;left:675.40px;transform:scaleX(0.9793);">Chart</div>
<div class="t" style="top:242px;font-size:12px;color:#000;left:736.70px;">Auf</div>
<div class="t" style="top:242px;font-size:12px;color:#000;left:766.00px;transform:scaleX(1.0462);">Zu</div>
<div class="t" style="top:242px;font-size:12px;color:#000;left:798.35px;transform:scaleX(0.9521);">S:Projekt</div>
<div class="t" style="top:242px;font-size:12px;color:#000;left:881.50px;transform:scaleX(0.9511);">G:Kunde</div>
<div class="t" style="top:292px;font-size:12px;color:#000;left:293.58px;transform:scaleX(1.0190);">Datumsfilter</div>
<div class="t" style="top:292px;font-size:12px;color:#000;left:390.25px;transform:scaleX(0.9545);">Status</div>
<div class="t" style="top:292px;font-size:12px;color:#000;left:453.96px;transform:scaleX(1.0365);">Projekttyp</div>
<div class="t" style="top:292px;font-size:12px;color:#000;left:541.20px;transform:scaleX(1.0193);">Abr.modus</div>
<div class="t" style="top:292px;font-size:12px;color:#000;left:632.20px;transform:scaleX(0.9585);">Zeitst.status</div>
<div class="t" style="top:292px;font-size:12px;color:#000;left:727.10px;transform:scaleX(1.0042);">Währung</div>
<div class="t" style="top:292px;font-size:12px;color:#000;left:806.90px;">Buchungsarchiv</div>
<div class="t" style="top:292px;font-size:12px;color:#000;left:929.70px;transform:scaleX(1.0229);">Optionen</div>
<div class="t" style="top:323px;font-size:12px;color:#000;font-weight:bold;left:287.80px;">Filter:</div>
<div class="t" style="top:323px;font-size:12px;color:#000;left:325.48px;transform:scaleX(1.0186);">[Michaela Meier]</div>
<div class="t" style="top:324px;font-size:11px;color:#2a2aa0;left:417.82px;transform:scaleX(0.9828);">[Alles]</div>
<div class="t" style="top:324px;font-size:11px;color:#468a18;left:450.38px;transform:scaleX(1.0231);">[S: Projekt]</div>
<div class="t" style="top:324px;font-size:11px;color:#468a18;left:506.97px;transform:scaleX(1.0314);">[G: Kunde]</div>
<div class="t" style="top:350px;font-size:12px;color:#000;left:292.76px;transform:scaleX(1.0441);">Bezeichnung</div>
<div class="t" style="top:350px;font-size:12px;color:#000;left:641.20px;transform:scaleX(1.1034);">Intern</div>
<div class="t" style="top:350px;font-size:12px;color:#000;left:756.25px;transform:scaleX(1.0500);">Preis</div>
<div class="t" style="top:350px;font-size:12px;color:#000;left:797.30px;transform:scaleX(1.0543);">Zeit be...</div>
<div class="t" style="top:350px;font-size:12px;color:#000;left:890.12px;transform:scaleX(1.0800);">Prozent</div>
<div class="t" style="top:350px;font-size:12px;color:#000;left:948.40px;transform:scaleX(1.0318);">Währu...</div>
<div class="t" style="top:370px;font-size:13.6px;color:#0c0c66;font-weight:bold;left:332.40px;transform:scaleX(0.9539);">&lt; ohne Kunde &gt;</div>
<div class="t" style="top:370px;font-size:11.5px;color:#8a8a8a;left:439.30px;">/ 10</div>
<div class="t" style="top:370px;font-size:12.5px;color:#808080;font-family:'Liberation Serif';left:685.10px;transform:scaleX(1.2429);-webkit-text-stroke:0;">&#931;</div>
<div class="t" style="top:370px;font-size:13.6px;color:#686868;font-weight:bold;left:724.56px;transform:scaleX(0.9600);">1.673,12 €</div>
<div class="t" style="top:370px;font-size:13.6px;color:#686868;font-weight:bold;left:825.94px;transform:scaleX(0.9600);">295,50</div>
<div class="t" style="top:370px;font-size:13.6px;color:#0c0c66;font-weight:bold;left:891.34px;transform:scaleX(0.9600);">44,89%</div>
<div class="t" style="top:390px;font-size:13.6px;color:#0c0c66;font-weight:bold;left:331.20px;transform:scaleX(0.9621);">Theta GmbH [202]</div>
<div class="t" style="top:390px;font-size:11.5px;color:#8a8a8a;left:452.00px;">/ 1</div>
<div class="t" style="top:390px;font-size:12.5px;color:#808080;font-family:'Liberation Serif';left:685.10px;transform:scaleX(1.2429);-webkit-text-stroke:0;">&#931;</div>
<div class="t" style="top:390px;font-size:13.6px;color:#686868;font-weight:bold;left:724.56px;transform:scaleX(0.9600);">8.428,00 €</div>
<div class="t" style="top:390px;font-size:13.6px;color:#686868;font-weight:bold;left:825.94px;transform:scaleX(0.9600);">105,53</div>
<div class="t" style="top:390px;font-size:13.6px;color:#0c0c66;font-weight:bold;left:891.34px;transform:scaleX(0.9600);">16,03%</div>
<div class="t" style="top:410px;font-size:13.6px;color:#0c0c66;font-weight:bold;left:331.20px;transform:scaleX(0.9584);">Alpha GmbH [1245]</div>
<div class="t" style="top:410px;font-size:11.5px;color:#8a8a8a;left:460.20px;">/ 3</div>
<div class="t" style="top:410px;font-size:12.5px;color:#808080;font-family:'Liberation Serif';left:685.10px;transform:scaleX(1.2429);-webkit-text-stroke:0;">&#931;</div>
<div class="t" style="top:410px;font-size:13.6px;color:#686868;font-weight:bold;left:724.56px;transform:scaleX(0.9600);">3.186,00 €</div>
<div class="t" style="top:410px;font-size:13.6px;color:#686868;font-weight:bold;left:832.66px;transform:scaleX(0.9600);">84,08</div>
<div class="t" style="top:410px;font-size:13.6px;color:#0c0c66;font-weight:bold;left:891.34px;transform:scaleX(0.9600);">12,77%</div>
<div class="t" style="top:430px;font-size:13.6px;color:#0c0c66;font-weight:bold;left:330.25px;transform:scaleX(0.9484);">Eta GmbH</div>
<div class="t" style="top:430px;font-size:11.5px;color:#8a8a8a;left:401.00px;">/ 1</div>
<div class="t" style="top:430px;font-size:13.6px;color:#686868;font-weight:bold;left:750.48px;transform:scaleX(0.9600);">0,00 €</div>
<div class="t" style="top:430px;font-size:13.6px;color:#686868;font-weight:bold;left:832.66px;transform:scaleX(0.9600);">49,25</div>
<div class="t" style="top:430px;font-size:13.6px;color:#0c0c66;font-weight:bold;left:899.02px;transform:scaleX(0.9600);">7,48%</div>
<div class="t" style="top:450px;font-size:13.6px;color:#0c0c66;font-weight:bold;left:330.25px;transform:scaleX(0.9548);">Sigma GmbH</div>
<div class="t" style="top:450px;font-size:11.5px;color:#8a8a8a;left:419.60px;">/ 2</div>
<div class="t" style="top:450px;font-size:12.5px;color:#808080;font-family:'Liberation Serif';left:685.10px;transform:scaleX(1.2429);-webkit-text-stroke:0;">&#931;</div>
<div class="t" style="top:450px;font-size:13.6px;color:#686868;font-weight:bold;left:710.16px;transform:scaleX(0.9600);">810.692,13 €</div>
<div class="t" style="top:450px;font-size:13.6px;color:#686868;font-weight:bold;left:832.66px;transform:scaleX(0.9600);">48,97</div>
<div class="t" style="top:450px;font-size:13.6px;color:#0c0c66;font-weight:bold;left:899.02px;transform:scaleX(0.9600);">7,44%</div>
<div class="t" style="top:470px;font-size:13.6px;color:#0c0c66;font-weight:bold;left:331.20px;transform:scaleX(0.9625);">Tau GmbH [9]</div>
<div class="t" style="top:470px;font-size:11.5px;color:#8a8a8a;left:425.80px;">/ 6</div>
<div class="t" style="top:470px;font-size:12.5px;color:#808080;font-family:'Liberation Serif';left:685.10px;transform:scaleX(1.2429);-webkit-text-stroke:0;">&#931;</div>
<div class="t" style="top:470px;font-size:13.6px;color:#686868;font-weight:bold;left:724.56px;transform:scaleX(0.9600);">2.806,33 €</div>
<div class="t" style="top:470px;font-size:13.6px;color:#686868;font-weight:bold;left:832.66px;transform:scaleX(0.9600);">45,20</div>
<div class="t" style="top:470px;font-size:13.6px;color:#0c0c66;font-weight:bold;left:899.02px;transform:scaleX(0.9600);">6,87%</div>
<div class="t" style="top:490px;font-size:13px;color:#000;left:330.51px;transform:scaleX(0.9852);">Sonstiges » Kostenanalyse</div>
<div class="t" style="top:490px;font-size:13px;color:#000;left:640.40px;">0,00 €</div>
<div class="t" style="top:490px;font-size:13px;color:#000;left:725.60px;">1.813,00 €</div>
<div class="t" style="top:490px;font-size:13px;color:#000;left:833.30px;">30,75</div>
<div class="t" style="top:490px;font-size:13px;color:#000;left:898.50px;">4,67%</div>
<div class="t" style="top:490px;font-size:13px;color:#000;left:968.80px;">€</div>
<div class="t" style="top:510px;font-size:13px;color:#000;left:330.49px;transform:scaleX(1.0078);">Sonstiges » Support</div>
<div class="t" style="top:510px;font-size:13px;color:#000;left:640.40px;">0,00 €</div>
<div class="t" style="top:510px;font-size:13px;color:#000;left:736.60px;">502,67 €</div>
<div class="t" style="top:510px;font-size:13px;color:#000;left:840.30px;">6,32</div>
<div class="t" style="top:510px;font-size:13px;color:#000;left:898.50px;">0,96%</div>
<div class="t" style="top:510px;font-size:13px;color:#000;left:968.80px;">€</div>
<svg class="a" style="left:0;top:0" width="1002" height="527" viewBox="0 0 1002 527">
 <defs>
  <filter id="sh" x="-10%" y="-10%" width="130%" height="140%">
   <feGaussianBlur in="SourceAlpha" stdDeviation="2.8"/>
   <feOffset dx="3" dy="3.5" result="b"/>
   <feComponentTransfer><feFuncA type="linear" slope="0.5"/></feComponentTransfer>
   <feMerge><feMergeNode/><feMergeNode in="SourceGraphic"/></feMerge>
  </filter>
 </defs>
 <g filter="url(#sh)" fill="none" stroke="#c40000" stroke-width="2.4">
  <rect x="13.2" y="390.2" width="219.6" height="28.6"/>
  <rect x="791.2" y="220.2" width="76.6" height="46.6"/>
  <rect x="875.2" y="220.2" width="73.6" height="46.6"/>
  <rect x="285.2" y="318.2" width="296.6" height="27.6"/>
 </g>
 <g filter="url(#sh)" fill="#c40000" stroke="none">
  <path d="M806.1 271.2 L516.6 313.4 L516.6 317 L806.1 274.8 Z"/>
  <path d="M502.4 317.1 L514.4 308.1 L516.5 322.4 Z"/>
  <path d="M911.9 274.2 L580.5 329.4 L580.5 333 L911.9 277.8 Z"/>
  <path d="M566.3 333.4 L578.3 324.2 L580.7 338.4 Z"/>
 </g>
</svg>
</body></html>
